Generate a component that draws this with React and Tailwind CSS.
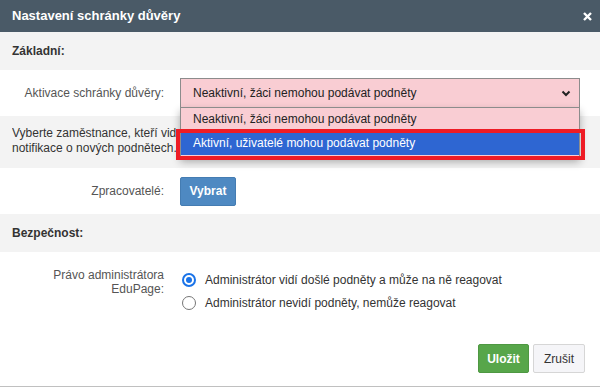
import React from 'react';

const Section = ({ children }) => (
  <div className="h-[38px] bg-[#f3f3f3] flex items-center px-3 text-[12px] font-bold text-[#333]">
    {children}
  </div>
);

const Radio = ({ checked, children }) => (
  <label className="flex items-center gap-[9px] h-[23px] text-[12px] text-[#333]">
    <span
      className={
        checked
          ? 'w-[14px] h-[14px] rounded-full border-2 border-[#1a73e8] flex items-center justify-center'
          : 'w-[14px] h-[14px] rounded-full border border-[#767676]'
      }
    >
      {checked && <span className="w-[6px] h-[6px] rounded-full bg-[#1a73e8]" />}
    </span>
    {children}
  </label>
);

export default function App() {
  return (
    <div
      className="w-[600px] h-[387px] bg-white overflow-hidden relative border-b border-[#c0c0c0]"
      style={{ fontFamily: '"Liberation Sans", Arial, sans-serif' }}
    >
      <div className="h-[32px] bg-[#4a5a67] flex items-center justify-between pl-3 pr-[8px]">
        <span className="text-white text-[13px] font-bold">Nastavení schránky důvěry</span>
        <svg width="9" height="9" viewBox="0 0 9 9" className="mt-[1px]">
          <path d="M1 1 L8 8 M8 1 L1 8" stroke="white" strokeWidth="2.4" />
        </svg>
      </div>

      <Section>Základní:</Section>

      <div className="h-[46px] flex items-center">
        <div className="w-[164px] whitespace-nowrap text-right text-[12px] text-[#555]">Aktivace schránky důvěry:</div>
        <div className="ml-[16px] w-[400px] h-[30px] bg-[#f9cdd3] border border-[#8c8c8c] flex items-center justify-between pl-3 pr-[8px] text-[12px] text-[#222]">
          <span>Neaktivní, žáci nemohou podávat podněty</span>
          <svg width="10" height="7" viewBox="0 0 10 7">
            <path d="M1.5 1.5 L5 5 L8.5 1.5" stroke="#222" strokeWidth="2" fill="none" />
          </svg>
        </div>
      </div>

      <div className="h-[52px] bg-[#f3f3f3] pl-3 pt-[10px] text-[12px] leading-[15px] text-[#333]">
        <div className="w-[164px] overflow-hidden whitespace-nowrap">
          Vyberte zaměstnance, kteří vidí podněty a dostávají<br />
          notifikace o nových podnětech.
        </div>
      </div>

      <div className="h-[46px] flex items-center">
        <div className="w-[164px] text-right text-[12px] text-[#555]">Zpracovatelé:</div>
        <button className="ml-[16px] w-[56px] h-[29px] bg-[#4e89c2] border border-[#447cb2] rounded-[2px] text-white text-[12px] font-bold">
          Vybrat
        </button>
      </div>

      <Section>Bezpečnost:</Section>

      <div className="h-[92px] flex pt-[16px]">
        <div className="w-[164px] text-right text-[12px] leading-[14px] text-[#555]">
          Právo administrátora<br />EduPage:
        </div>
        <div className="ml-[18px] flex flex-col">
          <Radio checked>Administrátor vidí došlé podněty a může na ně reagovat</Radio>
          <Radio>Administrátor nevidí podněty, nemůže reagovat</Radio>
        </div>
      </div>

      <div className="flex justify-end gap-[4px] pr-[15px]">
        <button className="w-[51px] h-[29px] bg-[#57a64a] border border-[#4e9842] rounded-[2px] text-white text-[12px] font-bold">
          Uložit
        </button>
        <button className="w-[52px] h-[29px] bg-[#f5f5f8] border border-[#d6d6d6] rounded-[2px] text-[#333] text-[12px]">
          Zrušit
        </button>
      </div>

      <div className="absolute left-[180px] top-[107px] w-[400px] bg-[#f9cdd3] border border-[#8c8c8c] shadow-[0_4px_8px_rgba(0,0,0,0.3)] text-[12px]">
        <div className="h-[22px] flex items-center pl-3 text-[#222]">Neaktivní, žáci nemohou podávat podněty</div>
        <div className="h-[25px] bg-[#2e66d2] flex items-center pl-3 text-white">Aktivní, uživatelé mohou podávat podněty</div>
        <div className="h-[2px]" />
      </div>
      <div className="absolute left-[176px] top-[129px] w-[409px] h-[31px] border-4 border-[#ee1c25]" />
    </div>
  );
}
